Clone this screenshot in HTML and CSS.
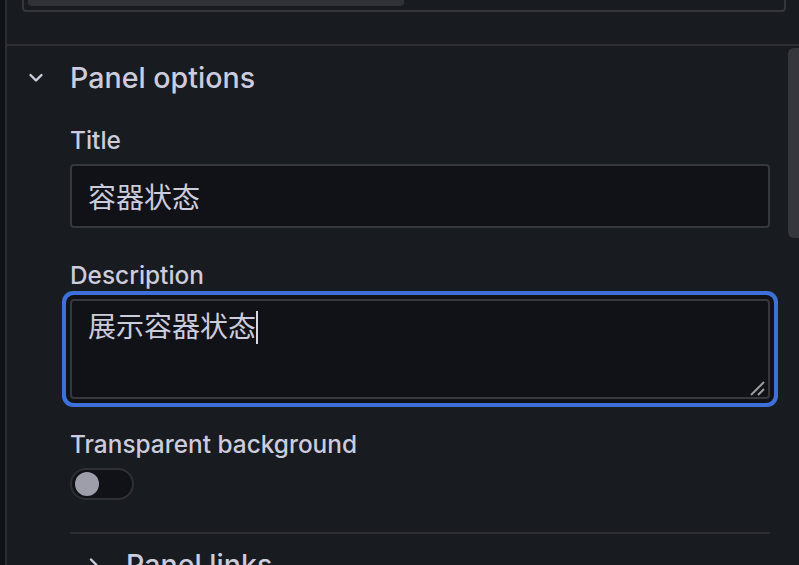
FILE: index.html
```html
<!DOCTYPE html>
<html lang="en">
<head>
<meta charset="utf-8">
<title>Panel options</title>
<link rel="stylesheet" href="styles.css">
</head>
<body>
<div class="app">
  <div class="gutter"></div>
  <div class="pane">
    <div class="top-area">
      <div class="prev-box"><div class="prev-bar"></div></div>
    </div>
    <div class="scroll-area">
      <div class="content">
        <div class="category-header">
          <svg class="chevron" width="16" height="16" viewBox="0 0 16 16"><polyline points="2.5,5 8,10.5 13.5,5" fill="none" stroke="#ccccdc" stroke-width="2.4" stroke-linecap="round" stroke-linejoin="round"/></svg>
          <span class="category-title">Panel options</span>
        </div>
        <div class="category-body">
          <div class="field">
            <div class="label">Title</div>
            <div class="input">容器状态</div>
          </div>
          <div class="field field-textarea">
            <div class="label">Description</div>
            <div class="textarea focused">
              <span class="ta-text">展示容器状态</span><span class="caret"></span>
              <svg class="resize" width="18" height="18" viewBox="0 0 18 18"><line x1="2" y1="16" x2="15" y2="3" stroke="#9b9b9b" stroke-width="2"/><line x1="9" y1="16" x2="15" y2="10" stroke="#9b9b9b" stroke-width="2"/></svg>
            </div>
          </div>
          <div class="field">
            <div class="label">Transparent background</div>
            <div class="switch"><div class="knob"></div></div>
          </div>
          <div class="separator"></div>
          <div class="sub-header">
            <svg class="chevron" width="16" height="16" viewBox="0 0 16 16"><polyline points="5,2.5 10.5,8 5,13.5" fill="none" stroke="#ccccdc" stroke-width="2.4" stroke-linecap="round" stroke-linejoin="round"/></svg>
            <span class="category-title">Panel links</span>
          </div>
        </div>
      </div>
      <div class="scrollbar"><div class="thumb"></div></div>
    </div>
  </div>
</div>
</body>
</html>
```
FILE: styles.css
```css
html, body {
  margin: 0;
  padding: 0;
  width: 799px;
  height: 565px;
  overflow: hidden;
  background: #181b1f;
  font-family: Inter, "Noto Sans CJK SC", sans-serif;
  color: #ccccdc;
}

.app {
  display: flex;
  height: 565px;
}

.gutter {
  width: 5px;
  background: #111217;
  flex-shrink: 0;
}

.pane {
  flex: 1;
  display: flex;
  flex-direction: column;
  border-left: 2px solid #2c2e33;
  min-width: 0;
}

.top-area {
  height: 44px;
  border-bottom: 2px solid #2c2e33;
  flex-shrink: 0;
}

.prev-box {
  box-sizing: border-box;
  margin: -20px 13px 0 15px;
  height: 32px;
  border: 2px solid #34363b;
  border-radius: 4px;
  padding: 18px 0 0 4px;
}

.prev-bar {
  width: 376px;
  height: 6px;
  background: #303237;
  border-radius: 0 0 4px 4px;
}

.scroll-area {
  flex: 1;
  display: flex;
  min-height: 0;
}

.content {
  flex: 1;
  padding: 0 18px 0 0;
  min-width: 0;
}

.category-header {
  display: flex;
  align-items: center;
  padding: 12px 0 0 21px;
  height: 40px;
}

.chevron {
  flex-shrink: 0;
}

.category-title {
  font-size: 28.6px;
  font-weight: 500;
  line-height: 40px;
  margin-left: 26px;
  white-space: nowrap;
}

.category-body {
  margin-top: 27px;
  padding-left: 63px;
}

.field {
  margin-bottom: 32px;
}

.field-textarea {
  margin-bottom: 30px;
}

.label {
  font-size: 24.4px;
  font-weight: 500;
  line-height: 30px;
  margin-bottom: 9px;
}

.input {
  box-sizing: border-box;
  height: 64px;
  border: 2px solid #37383d;
  border-radius: 4px;
  background: #111217;
  padding: 6px 16px 0;
  font-size: 28px;
  line-height: 52px;
}

.textarea {
  position: relative;
  box-sizing: border-box;
  height: 100px;
  border: 2px solid #37383d;
  border-radius: 4px;
  background: #111217;
  padding: 8px 16px;
  font-size: 28px;
  line-height: 36px;
}

.textarea.focused {
  box-shadow: 0 0 0 4px #111217, 0 0 0 8px #3d71d9;
}

.caret {
  display: inline-block;
  width: 2px;
  height: 33px;
  background: #d8d8e4;
  vertical-align: -7px;
}

.resize {
  position: absolute;
  right: 1px;
  bottom: 0;
}

.switch {
  box-sizing: border-box;
  width: 64px;
  height: 32px;
  border: 2px solid #2e3035;
  border-radius: 16px;
  background: #111217;
  padding: 2px 3px;
}

.knob {
  width: 24px;
  height: 24px;
  border-radius: 50%;
  background: #9d9eaa;
}

.separator {
  height: 2px;
  background: #2c2e33;
}

.sub-header {
  display: flex;
  align-items: center;
  padding: 11px 0 0 16px;
  height: 40px;
}

.sub-header .category-title {
  margin-left: 24px;
}

.scrollbar {
  width: 11px;
  flex-shrink: 0;
}

.thumb {
  margin-top: 2px;
  height: 190px;
  background: #35373c;
  border-radius: 6px 0 0 6px;
}
```
